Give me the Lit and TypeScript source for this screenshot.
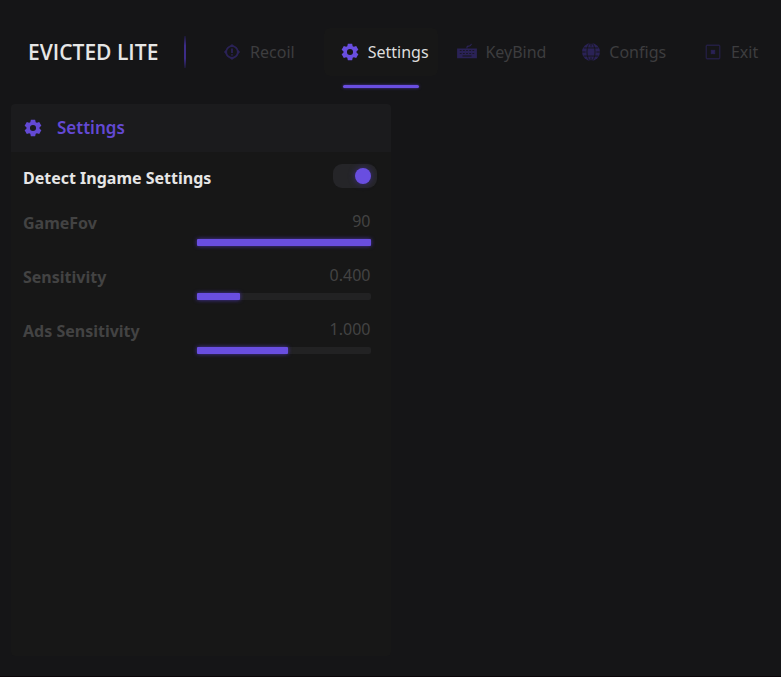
import { LitElement, html, css, svg } from "lit";
import { customElement, property, state } from "lit/decorators.js";
import { classMap } from "lit/directives/class-map.js";
import { styleMap } from "lit/directives/style-map.js";

const gear = svg`<path fill="currentColor" fill-rule="evenodd" d="M7.6 0.8h4.8l.6 2.7 1.3.8 2.6-.9 2.4 4.1-2 1.8v1.4l2 1.8-2.4 4.1-2.6-.9-1.3.8-.6 2.7H7.6L7 16.5l-1.3-.8-2.6.9-2.4-4.1 2-1.8V9.300l-2-1.800 2.400-4.100 2.600.9L7 3.500zM10 6.600a3.400 3.400 0 1 0 0 6.800a3.400 3.400 0 1 0 0-6.800z"/>`;

const icons: Record<string, unknown> = {
  gear,
  recoil: svg`<g fill="none" stroke="currentColor" stroke-width="2"><circle cx="10" cy="10" r="6.500"/><path d="M10 6v5M10 12.500v1.500"/></g><path fill="currentColor" d="M10 1l3 3H7zM10 19l3-3H7zM1 10l3-3v6zM19 10l-3-3v6z"/>`,
  keyboard: svg`<path fill="none" stroke="currentColor" stroke-width="1.300" d="M10 6V4.500q0-1 2-1t3-2.500"/><path fill="currentColor" fill-rule="evenodd" d="M-1 6h22v11H-1zM2 8v1h2V8zM5.500 8v1h2V8zM9 8v1h2V8zM12.500 8v1h2V8zM16 8v1h2V8zM2 11v1h2V11zM5.500 11v1h2V11zM9 11v1h2V11zM12.500 11v1h2V11zM16 11v1h2V11zM5 14v1h10v-1z"/>`,
  globe: svg`<circle cx="10" cy="10" r="10" fill="currentColor"/><g class="cut" fill="none" stroke-width="1"><ellipse cx="10" cy="10" rx="4.500" ry="10"/><path d="M10 0v4M10 16v4M0 10h4M16 10h4M2 5.500h16M2 14.500h16"/></g>`,
  exit: svg`<rect x="2.500" y="2.500" width="15" height="15" rx="1" fill="none" stroke="currentColor" stroke-width="1.500" opacity=".7"/><path d="M8 8l4 4M12 8l-4 4" fill="none" stroke="currentColor" stroke-width="2.500"/>`,
};

@customElement("ui-icon")
export class UiIcon extends LitElement {
  @property() name = "gear";

  static styles = css`
    :host { display: block; flex: none; width: 18px; height: 18px; }
    svg { display: block; width: 100%; height: 100%; overflow: visible; }
    .cut { stroke: #151517; }
  `;

  render() {
    return html`<svg viewBox="0 0 20 20" aria-hidden="true">${icons[this.name]}</svg>`;
  }
}

@customElement("value-slider")
export class ValueSlider extends LitElement {
  @property() label = "";
  @property({ type: Number }) value = 0;
  @property({ type: Number }) max = 1;
  @property({ type: Number }) digits = 0;

  static styles = css`
    :host { display: block; color: #434343; }
    .row { display: grid; grid-template-columns: 1fr 1fr; height: 54px; }
    label { font-weight: 700; line-height: 24px; padding-top: 3px; }
    .control { display: flex; flex-direction: column; }
    output { text-align: right; line-height: 24px; height: 31px; padding-top: 1px; box-sizing: border-box; }
    .bar { display: grid; height: 7px; border-radius: 2px; background: #222223; }
    .fill, input { grid-area: 1 / 1; }
    .fill { background: #694ee0; border-radius: 1px; box-shadow: 0 0 4px #4a35a8; }
    input {
      appearance: none; width: 100%; height: 7px; margin: 0;
      background: none; opacity: 0; cursor: pointer;
    }
  `;

  render() {
    const width = `${(this.value / this.max) * 100}%`;
    return html`
      <div class="row">
        <label for="range">${this.label}</label>
        <div class="control">
          <output for="range">${this.value.toFixed(this.digits)}</output>
          <div class="bar">
            <div class="fill" style=${styleMap({ width })}></div>
            <input id="range" type="range" min="0" max=${this.max}
              step=${this.digits ? 0.001 : 1} .value=${String(this.value)}
              @input=${(e: Event) => (this.value = Number((e.target as HTMLInputElement).value))}>
          </div>
        </div>
      </div>`;
  }
}

const tabs = [
  { name: "Recoil", icon: "recoil" },
  { name: "Settings", icon: "gear" },
  { name: "KeyBind", icon: "keyboard" },
  { name: "Configs", icon: "globe" },
  { name: "Exit", icon: "exit" },
];

@customElement("app-root")
export class AppRoot extends LitElement {
  @state() private active = "Settings";

  static styles = css`
    * { box-sizing: border-box; }
    :host {
      display: flex; flex-direction: column; min-height: 100vh; box-sizing: border-box;
      padding-bottom: 20px; border-bottom: 1px solid #0b0508;
      background: #151517; color: #e6e6e6;
      font: 16px/24px "Noto Sans", sans-serif;
    }
    header { display: flex; align-items: flex-start; padding: 28px 8px 16px 28px; }
    h1 {
      margin: 0; flex: none; width: 156px; line-height: 48px;
      font-family: "Open Sans", sans-serif; font-size: 21px; font-weight: 600;
    }
    .divider {
      flex: none; width: 2px; height: 32px; margin: 8px 16px 0 0;
      background: linear-gradient(#1b1830, #3c2c88 30%, #3c2c88 70%, #1b1830);
    }
    nav { flex: 1; display: grid; grid-template-columns: repeat(4, 114fr) 84fr; gap: 8px; }
    button {
      display: flex; flex-direction: column; align-items: center; gap: 9px;
      border: 0; padding: 0; background: none; color: #3d3d3f; font: inherit; cursor: pointer;
    }
    .face {
      display: flex; align-items: center; justify-content: center; gap: 9px;
      width: 100%; height: 48px; border-radius: 6px;
    }
    .face ui-icon { color: #2a2256; }
    .line { width: 76px; height: 3px; border-radius: 2px; }
    .active { color: #dedede; }
    .active .face { padding-left: 8px; background: #171717; }
    .active .face ui-icon { color: #694ee0; }
    .active .line { background: #694ee0; box-shadow: 0 0 3px #4a35a8; }
    main { flex: 1; display: flex; padding: 0 11px; }
    .panel { width: 50%; background: #171717; border-radius: 4px; }
    h2 {
      display: flex; align-items: center; gap: 15px; height: 48px; margin: 0;
      padding: 0 13px; background: #1b1b1d; border-radius: 4px 4px 0 0;
      color: #6349d4; font-size: 17px; font-weight: 600;
    }
    .fields { padding: 12px 20px 0 12px; }
    .toggle { display: flex; justify-content: space-between; height: 44px; font-weight: 700; }
    .toggle label { padding-top: 2px; }
    .toggle input {
      appearance: none; display: flex; align-items: center; flex: none;
      width: 44px; height: 24px; margin: 0 -6px 0 0; padding: 0 6px;
      border-radius: 9px; background: #252528; cursor: pointer;
    }
    .toggle input::before {
      content: ""; width: 16px; height: 16px; border-radius: 50%; background: #4a4a50;
    }
    .toggle input:checked { justify-content: flex-end; }
    .toggle input:checked::before { background: #694ee0; box-shadow: 0 0 6px #3c2e7c; }
  `;

  render() {
    return html`
      <header>
        <h1>EVICTED LITE</h1>
        <div class="divider"></div>
        <nav>
          ${tabs.map((t) => html`
            <button class=${classMap({ active: t.name === this.active })}
              @click=${() => (this.active = t.name)}>
              <span class="face"><ui-icon name=${t.icon}></ui-icon>${t.name}</span>
              <span class="line"></span>
            </button>`)}
        </nav>
      </header>
      <main>
        <section class="panel">
          <h2><ui-icon name="gear"></ui-icon>Settings</h2>
          <div class="fields">
            <div class="toggle">
              <label for="detect">Detect Ingame Settings</label>
              <input id="detect" type="checkbox" checked>
            </div>
            <value-slider label="GameFov" .value=${90} .max=${90}></value-slider>
            <value-slider label="Sensitivity" .value=${0.4} .max=${1.6} .digits=${3}></value-slider>
            <value-slider label="Ads Sensitivity" .value=${1} .max=${1.9} .digits=${3}></value-slider>
          </div>
        </section>
      </main>`;
  }
}
